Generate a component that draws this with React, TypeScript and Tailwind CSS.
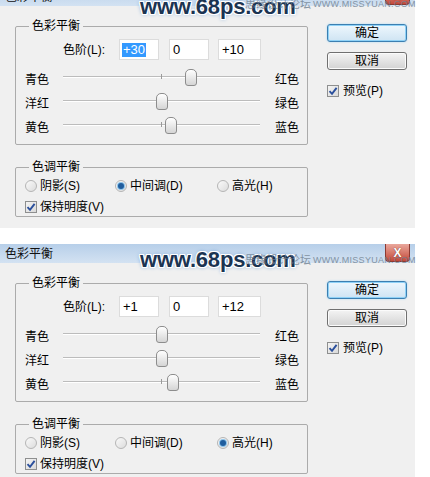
const rows = [
  { left: '青色', right: '红色' },
  { left: '洋红', right: '绿色' },
  { left: '黄色', right: '蓝色' },
]

const tones = [
  { key: 'shadow', label: '阴影(S)', width: 'w-[90px]' },
  { key: 'mid', label: '中间调(D)', width: 'w-[102px]' },
  { key: 'high', label: '高光(H)', width: 'w-[80px]' },
]

function fmt(v: number) {
  return v > 0 ? `+${v}` : `${v}`
}

function Check() {
  return (
    <span className="flex h-[12px] w-[12px] items-center justify-center border border-[#8e8f8f] bg-gradient-to-br from-[#f4f4f4] to-[#d9d9d9]">
      <svg width="10" height="10" viewBox="0 0 10 10">
        <path d="M1.5 5.2 L4 7.8 L8.6 1.8" fill="none" stroke="#2a4f9c" strokeWidth="1.9" />
      </svg>
    </span>
  )
}

function Radio({ on }: { on: boolean }) {
  return (
    <span className="flex h-[12px] w-[12px] items-center justify-center rounded-full border border-[#b5b5b5] bg-gradient-to-br from-[#fafafa] to-[#dcdcdc]">
      {on && <span className="h-[6px] w-[6px] rounded-full bg-[#1f5d9e] shadow-[0_0_0_1px_#8cc3ea]" />}
    </span>
  )
}

function Group({ title, className, children }: { title: string; className: string; children: React.ReactNode }) {
  return (
    <div className={`relative rounded-[2px] border border-[#ababab] ${className}`}>
      <span className="absolute left-[13px] top-[-8px] bg-[#f0f0f0] px-[3px] text-[12px] leading-[14px]">{title}</span>
      {children}
    </div>
  )
}

function Slider({ value }: { value: number }) {
  const left = 98.5 + value * 0.985 - 6
  return (
    <div className="relative h-full w-[197px]">
      <div className="absolute left-0 right-0 top-[8px] h-[2px] border-t border-b border-t-[#bcbcbc] border-b-white" />
      <div className="absolute left-[98px] top-[6px] h-[5px] w-px bg-[#9a9a9a]" />
      <div
        className="absolute top-[1px] h-[17px] w-[12px] rounded-t-[5px] rounded-b-[3px] border border-[#8d8d8d] bg-gradient-to-b from-white to-[#d5d5d5]"
        style={{ left }}
      />
    </div>
  )
}

function Dialog({ values, tone, selected }: { values: number[]; tone: string; selected?: boolean }) {
  return (
    <div className="w-[415px]">
      <div className="flex h-[19px] items-start bg-gradient-to-b from-[#b7cfe9] to-[#d3e2f2]">
        <span className="pl-[5px] pt-[3px] text-[12px] leading-[14px] text-[#111]">色彩平衡</span>
        <span className="ml-auto mr-[5px] flex h-[18px] w-[25px] items-center justify-center rounded-b-[4px] border border-t-0 border-[#8b3a32] bg-gradient-to-b from-[#e9a79c] to-[#c2483b] text-[12px] font-bold leading-none text-white [text-shadow:0_0_1px_#5a1a14]">
          X
        </span>
      </div>
      <div className="flex h-[222px] items-start bg-[#f0f0f0] pt-[18px] text-[12px] leading-[14px] text-black">
        <div className="ml-[15px] mt-[2px] flex w-[293px] flex-col gap-[22px]">
          <Group title="色彩平衡" className="h-[119px] pt-[12px]">
            <div className="flex h-[21px] items-center pl-[47px]">
              <span className="w-[56px]">色阶(L):</span>
              <span className="flex h-[21px] w-[40px] items-center border border-[#dcdcdc] bg-white pl-[2px] text-[13px]">
                {selected ? <span className="bg-[#3399ff] px-px text-white">{fmt(values[0])}</span> : <span className="px-px">{fmt(values[0])}</span>}
              </span>
              <span className="ml-[10px] flex h-[21px] w-[40px] items-center border border-[#dcdcdc] bg-white pl-[3px] text-[13px]">
                {fmt(values[1])}
              </span>
              <span className="ml-[9px] flex h-[21px] w-[43px] items-center border border-[#dcdcdc] bg-white pl-[3px] text-[13px]">
                {fmt(values[2])}
              </span>
            </div>
            <div className="mt-[8px] flex flex-col">
              {rows.map((r, i) => (
                <div key={r.left} className="flex h-[24px] items-center pl-[9px]">
                  <span className="w-[38px]">{r.left}</span>
                  <Slider value={values[i]} />
                  <span className="ml-[15px]">{r.right}</span>
                </div>
              ))}
            </div>
          </Group>
          <Group title="色调平衡" className="h-[50px] pl-[9px] pt-[10px]">
            <div className="flex h-[16px] items-center">
              {tones.map((t) => (
                <div key={t.key} className={`flex items-center gap-[3px] ${t.width}`}>
                  <Radio on={t.key === tone} />
                  <span>{t.label}</span>
                </div>
              ))}
            </div>
            <div className="mt-[5px] flex h-[16px] items-center gap-[3px]">
              <Check />
              <span>保持明度(V)</span>
            </div>
          </Group>
        </div>
        <div className="ml-[19px] flex w-[80px] flex-col">
          <button className="flex h-[18px] items-center justify-center rounded-[3px] border border-[#3c7fb1] bg-gradient-to-b from-[#eef7fd] to-[#cfe4f3] shadow-[inset_0_0_0_1px_#8fd2f7,0_0_2px_#9fd7f6]">
            确定
          </button>
          <button className="mt-[10px] flex h-[18px] items-center justify-center rounded-[3px] border border-[#707070] bg-gradient-to-b from-[#f4f4f4] to-[#d3d3d3] shadow-[inset_0_0_0_1px_#fbfbfb]">
            取消
          </button>
          <div className="mt-[14px] flex h-[13px] items-center gap-[4px]">
            <Check />
            <span>预览(P)</span>
          </div>
        </div>
      </div>
    </div>
  )
}

function Watermark({ top }: { top: string }) {
  return (
    <span
      className={`absolute left-[140px] ${top} text-[22px] font-bold leading-[22px] tracking-[-0.2px] text-[#1b3452] [text-shadow:1px_0_0_#fff,-1px_0_0_#fff,0_1px_0_#fff,0_-1px_0_#fff,1px_1px_0_#fff,-1px_-1px_0_#fff,1px_-1px_0_#fff,-1px_1px_0_#fff,0_0_4px_#5d93cf]`}
    >
      www.68ps.com
    </span>
  )
}

function SiteTag({ top }: { top: string }) {
  return (
    <span className={`absolute left-[245px] ${top} flex items-center gap-[2px] text-[#6f7f90] opacity-80`}>
      <span className="text-[11px] leading-[12px]">思缘设计论坛</span>
      <span className="text-[9px] leading-[12px] tracking-[0.3px]">WWW.MISSYUAN.COM</span>
    </span>
  )
}

export default function App() {
  return (
    <div className="relative h-[477px] w-[430px] overflow-hidden bg-white font-['Liberation_Sans','Noto_Sans_CJK_SC',sans-serif]">
      <div className="h-[228px] overflow-hidden">
        <div className="mt-[-13px]">
          <Dialog values={[30, 0, 10]} tone="mid" selected />
        </div>
      </div>
      <div className="h-[16px]" />
      <Dialog values={[1, 0, 12]} tone="high" />

      <Watermark top="top-[-4px]" />
      <Watermark top="top-[249px]" />
      <SiteTag top="top-[-2px]" />
      <SiteTag top="top-[254px]" />
    </div>
  )
}
